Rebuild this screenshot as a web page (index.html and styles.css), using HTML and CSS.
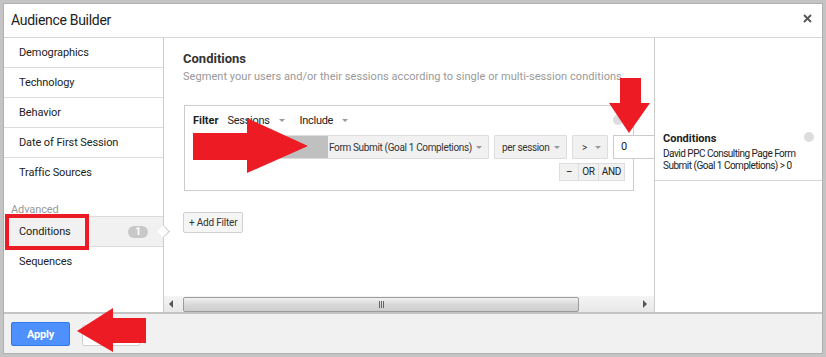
FILE: index.html
```html
<!DOCTYPE html>
<html lang="en">
<head>
    <meta charset="UTF-8">
    <title>Audience Builder</title>
    <link rel="stylesheet" href="styles.css">
</head>
<body>
    <div class="dialog">
        <div class="dialog-head">
            <span class="dialog-title">Audience Builder</span>
            <svg class="close" width="9" height="9" viewBox="0 0 9 9"><path d="M1 1L8 8M8 1L1 8" stroke="#555" stroke-width="1.8"/></svg>
        </div>

        <div class="dialog-body">
            <ul class="nav">
                <li class="nav-item">Demographics</li>
                <li class="nav-item">Technology</li>
                <li class="nav-item">Behavior</li>
                <li class="nav-item">Date of First Session</li>
                <li class="nav-item last">Traffic Sources</li>
                <li class="nav-label">Advanced</li>
                <li class="nav-item active">Conditions <span class="badge">1</span></li>
                <li class="nav-item last">Sequences</li>
            </ul>

            <div class="main">
                <div class="main-scroll">
                    <h2 class="section-title">Conditions</h2>
                    <p class="section-sub">Segment your users and/or their sessions according to single or multi-session conditions</p>

                    <div class="filter">
                        <span class="filter-remove"></span>
                        <div class="filter-head">
                            <b>Filter</b>
                            <span class="menu">Sessions <i class="caret"></i></span>
                            <span class="menu">Include <i class="caret"></i></span>
                        </div>
                        <div class="filter-row">
                            <span class="select metric"><span class="redacted"></span>Form Submit (Goal 1 Completions) <i class="caret"></i></span>
                            <span class="select scope">per session <i class="caret"></i></span>
                            <span class="select op">&gt; <i class="caret"></i></span>
                            <span class="value">0</span>
                        </div>
                        <div class="filter-actions">
                            <span class="mini">&ndash;</span><span class="mini">OR</span><span class="mini">AND</span>
                        </div>
                    </div>

                    <button class="btn add">+ Add Filter</button>
                </div>
                <div class="hscroll">
                    <span class="hs-arrow left"></span>
                    <span class="hs-thumb"><span class="grip"></span></span>
                    <span class="hs-arrow right"></span>
                </div>
            </div>

            <div class="side">
                <div class="summary">
                    <span class="summary-remove"></span>
                    <b>Conditions</b>
                    <p>David PPC Consulting Page Form Submit (Goal 1 Completions) &gt; 0</p>
                </div>
            </div>
        </div>

        <div class="dialog-foot">
            <button class="btn primary">Apply</button>
            <button class="btn">Cancel</button>
        </div>
    </div>

    <!-- annotation arrows drawn over the screenshot -->
    <svg class="marks" width="826" height="357" viewBox="0 0 826 357">
        <rect x="7" y="216" width="80" height="32" fill="none" stroke="#ed1c24" stroke-width="4"/>
        <polygon points="193,133 247,133 247,118 308,146 247,173 247,160 193,160" fill="#ed1c24"/>
        <polygon points="620,78 641,78 641,103 650,103 629,133 609,103 620,103" fill="#ed1c24"/>
        <polygon points="77,331 113,308 113,318 146,318 146,343 113,343 113,352" fill="#ed1c24"/>
    </svg>
</body>
</html>
```

FILE: styles.css
```css
body { margin: 0; padding: 3px; background: #c4c4c4; font-family: Roboto, "Liberation Sans", sans-serif; color: #222; }
.dialog { width: 820px; height: 351px; box-sizing: border-box; background: #fff; border: 1px solid #b0b0b0; display: flex; flex-direction: column; }

.dialog-head { height: 34px; flex-shrink: 0; display: flex; align-items: center; justify-content: space-between; padding: 0 10px 1px 7px; box-sizing: border-box; border-bottom: 1px solid #d6d6d6; }
.dialog-title { font-size: 14px; letter-spacing: -0.3px; }
.close { margin-bottom: 4px; }

.dialog-body { flex: 1; display: flex; min-height: 0; }

.nav { width: 159px; flex-shrink: 0; margin: 0; padding: 0; list-style: none; border-right: 1px solid #ccc; font-size: 11px; letter-spacing: -0.1px; }
.nav-item { height: 29px; line-height: 29px; padding-left: 15px; border-bottom: 1px solid #dcdcdc; position: relative; }
.nav-item.last { border-bottom: none; height: 30px; }
.nav-label { height: 29px; line-height: 14px; padding: 15px 0 0 7px; box-sizing: border-box; border-bottom: 1px solid #dcdcdc; color: #999; font-size: 11px; }
.nav-item.active { background: #f1f1f1; }
.nav-item.active::after { content: ""; position: absolute; right: -5px; top: 10px; width: 8px; height: 8px; background: #fff; border-top: 1px solid #ccc; border-right: 1px solid #ccc; transform: rotate(45deg); }
.badge { position: absolute; right: 15px; top: 9px; width: 20px; height: 12px; line-height: 12px; border-radius: 6px; background: #c8c8c8; color: #fff; font-size: 10px; font-weight: bold; text-align: center; }

.main { width: 490px; flex-shrink: 0; display: flex; flex-direction: column; border-right: 1px solid #ccc; }
.main-scroll { flex: 1; overflow: hidden; padding: 13px 0 0 19px; }
.section-title { margin: 0; font-size: 13px; font-weight: bold; line-height: 16px; color: #333; }
.section-sub { margin: 3px 0 0; font-size: 11px; line-height: 14px; color: #999; white-space: nowrap; letter-spacing: 0.05px; }

.filter { position: relative; width: 432px; height: 68px; margin: 21px 0 0 1px; padding: 7px 8px 9px; border: 1px solid #ccc; font-size: 10px; }
.filter-remove { position: absolute; right: 10px; top: 9px; width: 10px; height: 10px; border-radius: 50%; background: #ddd; }
.filter-head { display: flex; align-items: center; height: 14px; }
.filter-head b { font-size: 11px; margin-right: 9px; }
.menu { font-size: 11px; letter-spacing: -0.3px; margin-right: 15px; display: flex; align-items: center; gap: 9px; }
.caret { display: inline-block; width: 0; height: 0; border-left: 3px solid transparent; border-right: 3px solid transparent; border-top: 3px solid #999; }

.filter-row { display: flex; gap: 5px; margin-top: 8px; width: 470px; }
.select { flex-shrink: 0; display: flex; align-items: center; height: 22px; background: #f1f1f1; border: 1px solid #ddd; border-radius: 1px; padding-right: 6px; justify-content: space-between; white-space: nowrap; letter-spacing: -0.35px; color: #333; }
.metric { width: 288px; }
.redacted { width: 134px; height: 22px; background: #c0c0c0; margin-right: 1px; }
.metric .caret { margin-left: auto; }
.scope { width: 58px; padding-left: 7px; }
.op { width: 19px; padding-left: 9px; }
.value { flex-shrink: 0; width: 48px; height: 22px; line-height: 22px; padding-left: 7px; border: 1px solid #ccc; background: #fff; font-size: 11px; }

.filter-actions { display: flex; justify-content: flex-end; margin-top: 4px; }
.mini { height: 16px; line-height: 16px; padding: 0 3px; min-width: 12px; text-align: center; background: #f1f1f1; border: 1px solid #ddd; margin-left: -1px; font-size: 10px; letter-spacing: -0.3px; }

.btn { font-family: inherit; font-size: 10px; letter-spacing: -0.2px; height: 21px; padding: 0 5px; background: #f5f5f5; border: 1px solid #d0d0d0; border-radius: 2px; color: #333; }
.add { margin-top: 21px; }

.hscroll { height: 16px; flex-shrink: 0; display: flex; align-items: center; background: linear-gradient(#f4f4f4, #e8e8e8); }
.hs-arrow { width: 0; height: 0; border-top: 4px solid transparent; border-bottom: 4px solid transparent; }
.hs-arrow.left { border-right: 4px solid #555; margin: 0 10px 0 5px; }
.hs-arrow.right { border-left: 4px solid #555; margin-left: auto; margin-right: 7px; }
.hs-thumb { width: 394px; height: 13px; border: 1px solid #9c9c9c; border-radius: 2px; background: linear-gradient(#f2f2f2, #d8d8d8 50%, #cdcdcd); display: flex; justify-content: center; align-items: center; }
.grip { width: 6px; height: 7px; background: repeating-linear-gradient(90deg, #666 0 1px, transparent 1px 2px); margin-left: 1px; }

.side { flex: 1; }
.summary { position: relative; margin-top: 94px; padding: 0 8px 8px 8px; border-bottom: 1px solid #d6d6d6; font-size: 11px; }
.summary b { display: block; line-height: 14px; margin-bottom: 2px; }
.summary p { margin: 0; line-height: 12px; font-size: 10px; letter-spacing: -0.5px; }
.summary-remove { position: absolute; right: 8px; top: 0; width: 10px; height: 10px; border-radius: 50%; background: #ddd; }

.dialog-foot { height: 41px; flex-shrink: 0; display: flex; align-items: flex-start; gap: 12px; padding: 8px 0 0 7px; box-sizing: border-box; background: #f1f1f1; border-top: 2px solid #c4c4c4; }
.btn.primary { width: 59px; height: 24px; font-size: 11px; background: #4d90fe; border-color: #3079ed; color: #fff; font-weight: bold; }
.dialog-foot .btn:not(.primary) { width: 58px; height: 21px; margin-top: 3px; background: #fff; }

.marks { position: absolute; left: 0; top: 0; pointer-events: none; }
```
